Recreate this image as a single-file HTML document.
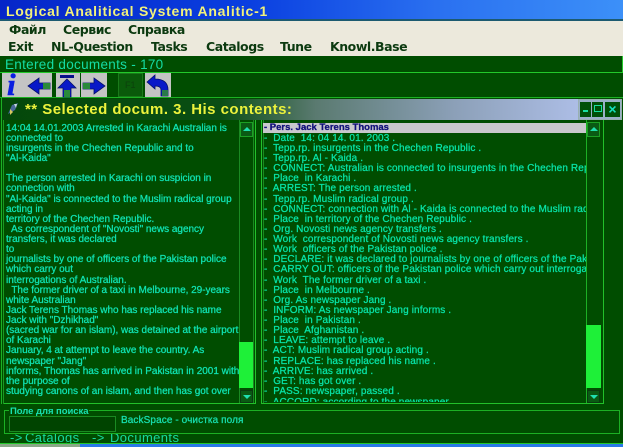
<!DOCTYPE html>
<html><head><meta charset="utf-8"><style>
*{margin:0;padding:0;box-sizing:border-box}
html,body{width:623px;height:447px;overflow:hidden;background:#004d00}
body{position:relative;font-family:"Liberation Sans","Noto Sans CJK SC",sans-serif}
.a{position:absolute}
.t{position:absolute;white-space:pre;line-height:10px}
.m{position:absolute;white-space:pre;font:bold 12.5px/16px "DejaVu Sans",sans-serif;color:#0c3a10;letter-spacing:-.45px}
.l .t{font-size:10px;font-weight:normal;color:#10e4b4;letter-spacing:-.02px;-webkit-text-stroke:.25px #10e4b4;left:6px;margin-top:1px}
.r .t{font-size:10px;color:#08e4a8;letter-spacing:.13px;-webkit-text-stroke:.25px #08e4a8;left:10px;margin-top:1px}
.btn{position:absolute;background:#c4c4c4;top:73px;height:24px}
</style></head><body>
<div class="a" style="left:0;top:0;width:623px;height:20px;background:linear-gradient(90deg,#0626c8 0%,#0a3fe0 40%,#2a70f0 70%,#3c90f8 100%)"></div>
<div class="a" style="left:0;top:19px;width:623px;height:2px;background:#1c5a70"></div>
<div class="t" style="left:6px;top:3px;font:bold 14px/16px 'Liberation Sans',sans-serif;color:#f2f27a;letter-spacing:.76px">Logical Analitical System Analitic-1</div>
<div class="a" style="left:0;top:21px;width:623px;height:35px;background:#ece9dc"></div>
<div class="m" style="left:9px;top:22px">Файл</div>
<div class="m" style="left:63px;top:22px">Сервис</div>
<div class="m" style="left:128px;top:22px">Справка</div>
<div class="m" style="left:8px;top:39px">Exit</div>
<div class="m" style="left:51px;top:39px">NL-Question</div>
<div class="m" style="left:151px;top:39px">Tasks</div>
<div class="m" style="left:206px;top:39px">Catalogs</div>
<div class="m" style="left:280px;top:39px">Tune</div>
<div class="m" style="left:330px;top:39px">Knowl.Base</div>
<div class="a" style="left:0;top:56px;width:623px;height:17px;background:#004d00;border-bottom:1px solid #22c82a;border-right:1px solid #22c82a"></div>
<div class="t" style="left:5px;top:58px;font-size:13.5px;line-height:14px;color:#14dca4;letter-spacing:.3px">Entered documents - 170</div>

<div class="a" style="left:0;top:73px;width:623px;height:25px;background:#004d00;border-bottom:1px solid #1cb024"></div>
<div class="btn" style="left:2px;width:25px"></div>
<div class="btn" style="left:27px;width:25px"></div>
<div class="btn" style="left:56px;width:24px"></div>
<div class="btn" style="left:81px;width:26px"></div>
<div class="btn" style="left:145px;width:26px"></div>
<div class="a" style="left:118px;top:73px;width:25px;height:24px;background:#0a5a0a;border:1px solid #1a7a1a"></div>
<div class="t" style="left:125px;top:80px;font-size:9px;color:#0c400c">F1</div>
<svg class="a" style="left:0;top:73px" width="175" height="25" viewBox="0 0 175 25">
<text x="7" y="22" font-family="Liberation Serif" font-style="italic" font-weight="bold" font-size="31" fill="#0a1ee0" stroke="#0a1ee0" stroke-width=".6">i</text>
<path d="M28 13l11-8v5h11v6H39v5z" fill="#0818c8" stroke="#06106a" stroke-width=".8"/>
<rect x="43" y="10" width="7" height="6" fill="#2a8a3a"/>
<rect x="60" y="2" width="14" height="3" fill="#06108a"/>
<path d="M67 6l9 9h-5v9h-8v-9h-5z" fill="#0818c8" stroke="#06106a" stroke-width=".8"/>
<rect x="64" y="17" width="6" height="7" fill="#2a8a3a"/>
<path d="M105 13l-11-8v5H83v6h11v5z" fill="#0818c8" stroke="#06106a" stroke-width=".8"/>
<rect x="83" y="10" width="7" height="6" fill="#2a8a3a"/>
<path d="M147 9l8-7v4c8 0 13 3 13 11v6h-7v-6c0-3-2-4-6-4v3z" fill="#0818c8" stroke="#06106a" stroke-width=".8"/>
<rect x="162" y="17" width="6" height="6" fill="#2a7a4a"/>
</svg>

<div class="a" style="left:0;top:98px;width:623px;height:306px;background:#004d00"></div>
<div class="a" style="left:2px;top:99px;width:604px;height:21px;background:linear-gradient(90deg,#04480a 0%,#0a4e14 36%,#5a7a70 52%,#8ca0b8 75%,#b4c4f0 100%)"></div>
<div class="a" style="left:1px;top:98px;width:1px;height:306px;background:#1cb024"></div>
<svg class="a" style="left:7px;top:102px" width="12" height="14" viewBox="0 0 12 14"><path d="M1 12L5 3l6-2-3 7z" fill="#4a6a9a"/><path d="M3 7l3 3-3 3z" fill="#d8c860"/><path d="M7 2l3 0-1 4z" fill="#c8d8e0"/></svg>
<div class="t" style="left:25px;top:102px;font:bold 15px/16px 'Liberation Sans',sans-serif;color:#ecf23c;letter-spacing:.47px">** Selected docum. 3. His contents:</div>
<div class="a" style="left:578px;top:99px;width:44px;height:21px;border:1px solid #98b0b0;background:#9ab0c8"></div>
<div class="a" style="left:580px;top:102px;width:11px;height:15px;background:#005008"></div>
<div class="a" style="left:583px;top:110px;width:5px;height:2px;background:#18e0a0"></div>
<div class="a" style="left:592px;top:102px;width:11px;height:15px;background:#005008"></div>
<div class="a" style="left:594px;top:105px;width:8px;height:7px;border:1px solid #18e0a0"></div>
<div class="a" style="left:605px;top:102px;width:15px;height:15px;background:#005008;color:#18e0c0;font:bold 14px/15px 'Liberation Sans';text-align:center">×</div>

<!-- left panel -->
<div class="a" style="left:4px;top:120px;width:252px;height:284px;background:#004d00;border-right:1px solid #22c02a;border-bottom:1px solid #22c02a"></div>
<div class="a" style="left:3px;top:120px;width:1px;height:284px;background:#1a9a22"></div>
<div class="l">
<div class="t" style="top:123px">14:04 14.01.2003 Arrested in Karachi Australian is</div>
<div class="t" style="top:133px">connected to</div>
<div class="t" style="top:143px">insurgents in the Chechen Republic and to</div>
<div class="t" style="top:153px">"Al-Kaida"</div>
<div class="t" style="top:173px">The person arrested in Karachi on suspicion in</div>
<div class="t" style="top:183px">connection with</div>
<div class="t" style="top:194px">"Al-Kaida" is connected to the Muslim radical group</div>
<div class="t" style="top:204px">acting in</div>
<div class="t" style="top:214px">territory of the Chechen Republic.</div>
<div class="t" style="top:224px">  As correspondent of "Novosti" news agency</div>
<div class="t" style="top:234px">transfers, it was declared</div>
<div class="t" style="top:244px">to</div>
<div class="t" style="top:254px">journalists by one of officers of the Pakistan police</div>
<div class="t" style="top:264px">which carry out</div>
<div class="t" style="top:275px">interrogations of Australian.</div>
<div class="t" style="top:285px">  The former driver of a taxi in Melbourne, 29-years</div>
<div class="t" style="top:295px">white Australian</div>
<div class="t" style="top:305px">Jack Terens Thomas who has replaced his name</div>
<div class="t" style="top:315px">Jack with "Dzhikhad"</div>
<div class="t" style="top:325px">(sacred war for an islam), was detained at the airport</div>
<div class="t" style="top:335px">of Karachi</div>
<div class="t" style="top:345px">January, 4 at attempt to leave the country. As</div>
<div class="t" style="top:356px">newspaper "Jang"</div>
<div class="t" style="top:366px">informs, Thomas has arrived in Pakistan in 2001 with</div>
<div class="t" style="top:376px">the purpose of</div>
<div class="t" style="top:386px">studying canons of an islam, and then has got over</div>
</div>
<div class="a" style="left:239px;top:120px;width:1px;height:283px;background:#1a8a22"></div>
<div class="a" style="left:253px;top:120px;width:1px;height:283px;background:#1a8a22"></div>
<div class="a" style="left:240px;top:120px;width:13px;height:283px;background:#004d00"></div>
<div class="a" style="left:240px;top:122px;width:13px;height:15px;background:#0a5a14;border:1px solid #1ca024"></div>
<div class="a" style="left:243px;top:127px;border:4px solid transparent;border-top:0;border-bottom:4px solid #20e0b0"></div>
<div class="a" style="left:239px;top:342px;width:14px;height:46px;background:#1ef038"></div>
<div class="a" style="left:240px;top:390px;width:13px;height:13px;background:#0a5a14;border:1px solid #0a3a10"></div>
<div class="a" style="left:243px;top:395px;border:4px solid transparent;border-bottom:0;border-top:4px solid #20e0b0"></div>

<!-- right panel -->
<div class="a" style="left:261px;top:120px;width:343px;height:284px;border-left:1px solid #22c02a;border-right:1px solid #22c02a;border-bottom:1px solid #22c02a"></div>
<div class="a" style="left:263px;top:120px;width:1px;height:283px;background:#1a8a22"></div>
<div class="r a" style="left:254px;top:0;width:332px;height:402px;overflow:hidden">
<div class="a" style="left:9px;top:123px;width:323px;height:10px;background:#c8c8cc"></div>
<div class="t" style="top:122px;color:#10107a;-webkit-text-stroke:.3px #10107a;font-weight:bold;font-size:9.5px;letter-spacing:0">- Pers. Jack Terens Thomas</div>
<div class="t" style="top:133px">-  Date  14: 04 14. 01. 2003 .</div>
<div class="t" style="top:143px">-  Tepp.rp. insurgents in the Chechen Republic .</div>
<div class="t" style="top:153px">-  Tepp.rp. Al - Kaida .</div>
<div class="t" style="top:163px">-  CONNECT: Australian is connected to insurgents in the Chechen Republic</div>
<div class="t" style="top:173px">-  Place  in Karachi .</div>
<div class="t" style="top:183px">-  ARREST: The person arrested .</div>
<div class="t" style="top:194px">-  Tepp.rp. Muslim radical group .</div>
<div class="t" style="top:204px">-  CONNECT: connection with Al - Kaida is connected to the Muslim radical</div>
<div class="t" style="top:214px">-  Place  in territory of the Chechen Republic .</div>
<div class="t" style="top:224px">-  Org. Novosti news agency transfers .</div>
<div class="t" style="top:234px">-  Work  correspondent of Novosti news agency transfers .</div>
<div class="t" style="top:244px">-  Work  officers of the Pakistan police .</div>
<div class="t" style="top:254px">-  DECLARE: it was declared to journalists by one of officers of the Pakistan</div>
<div class="t" style="top:264px">-  CARRY OUT: officers of the Pakistan police which carry out interrogations</div>
<div class="t" style="top:275px">-  Work  The former driver of a taxi .</div>
<div class="t" style="top:285px">-  Place  in Melbourne .</div>
<div class="t" style="top:295px">-  Org. As newspaper Jang .</div>
<div class="t" style="top:305px">-  INFORM: As newspaper Jang informs .</div>
<div class="t" style="top:315px">-  Place  in Pakistan .</div>
<div class="t" style="top:325px">-  Place  Afghanistan .</div>
<div class="t" style="top:335px">-  LEAVE: attempt to leave .</div>
<div class="t" style="top:345px">-  ACT: Muslim radical group acting .</div>
<div class="t" style="top:356px">-  REPLACE: has replaced his name .</div>
<div class="t" style="top:366px">-  ARRIVE: has arrived .</div>
<div class="t" style="top:376px">-  GET: has got over .</div>
<div class="t" style="top:386px">-  PASS: newspaper, passed .</div>
<div class="t" style="top:397px">-  ACCORD: according to the newspaper .</div>
</div>
<div class="a" style="left:586px;top:120px;width:1px;height:283px;background:#1cb024"></div>
<div class="a" style="left:587px;top:122px;width:13px;height:15px;background:#0a5a14;border:1px solid #1ca024"></div>
<div class="a" style="left:590px;top:127px;border:4px solid transparent;border-top:0;border-bottom:4px solid #20e0b0"></div>
<div class="a" style="left:586px;top:325px;width:15px;height:63px;background:#1ef038"></div>
<div class="a" style="left:587px;top:390px;width:13px;height:13px;background:#0a5a14;border:1px solid #0a3a10"></div>
<div class="a" style="left:590px;top:395px;border:4px solid transparent;border-bottom:0;border-top:4px solid #20e0b0"></div>

<!-- search -->
<div class="a" style="left:0;top:404px;width:623px;height:40px;background:#004d00"></div>
<div class="a" style="left:4px;top:410px;width:616px;height:24px;border:1px solid #1cb024"></div>
<div class="a" style="left:9px;top:405px;width:80px;height:10px;background:#004d00"></div>
<div class="t" style="left:10px;top:407px;font-size:9.5px;font-weight:bold;color:#18e0b0;letter-spacing:-.05px">Поле для поиска</div>
<div class="a" style="left:9px;top:416px;width:107px;height:16px;border:1px solid #1a8a22;background:#004400"></div>
<div class="t" style="left:121px;top:416px;font-size:10px;color:#18e0b0;letter-spacing:.1px;-webkit-text-stroke:.25px #18e0b0">BackSpace - очистка поля</div>
<div class="a" style="left:0;top:434px;width:623px;height:9px;background:#004d00;overflow:hidden">
<div class="t" style="left:10px;top:-4px;font-size:13px;line-height:15px;color:#18d8a0;letter-spacing:.4px">-&gt;</div>
<div class="t" style="left:25px;top:-4px;font-size:13px;line-height:15px;color:#18d8a0;letter-spacing:.4px">Catalogs</div>
<div class="t" style="left:92px;top:-4px;font-size:13px;line-height:15px;color:#18d8a0;letter-spacing:.4px">-&gt;</div>
<div class="t" style="left:110px;top:-4px;font-size:13px;line-height:15px;color:#18d8a0;letter-spacing:.4px">Documents</div>
</div>
<div class="a" style="left:0;top:443px;width:623px;height:1px;background:#22c82a"></div>
<div class="a" style="left:0;top:444px;width:80px;height:3px;background:#8aa888"></div>
<div class="a" style="left:80px;top:444px;width:543px;height:3px;background:#2a78e8"></div>
</body></html>
